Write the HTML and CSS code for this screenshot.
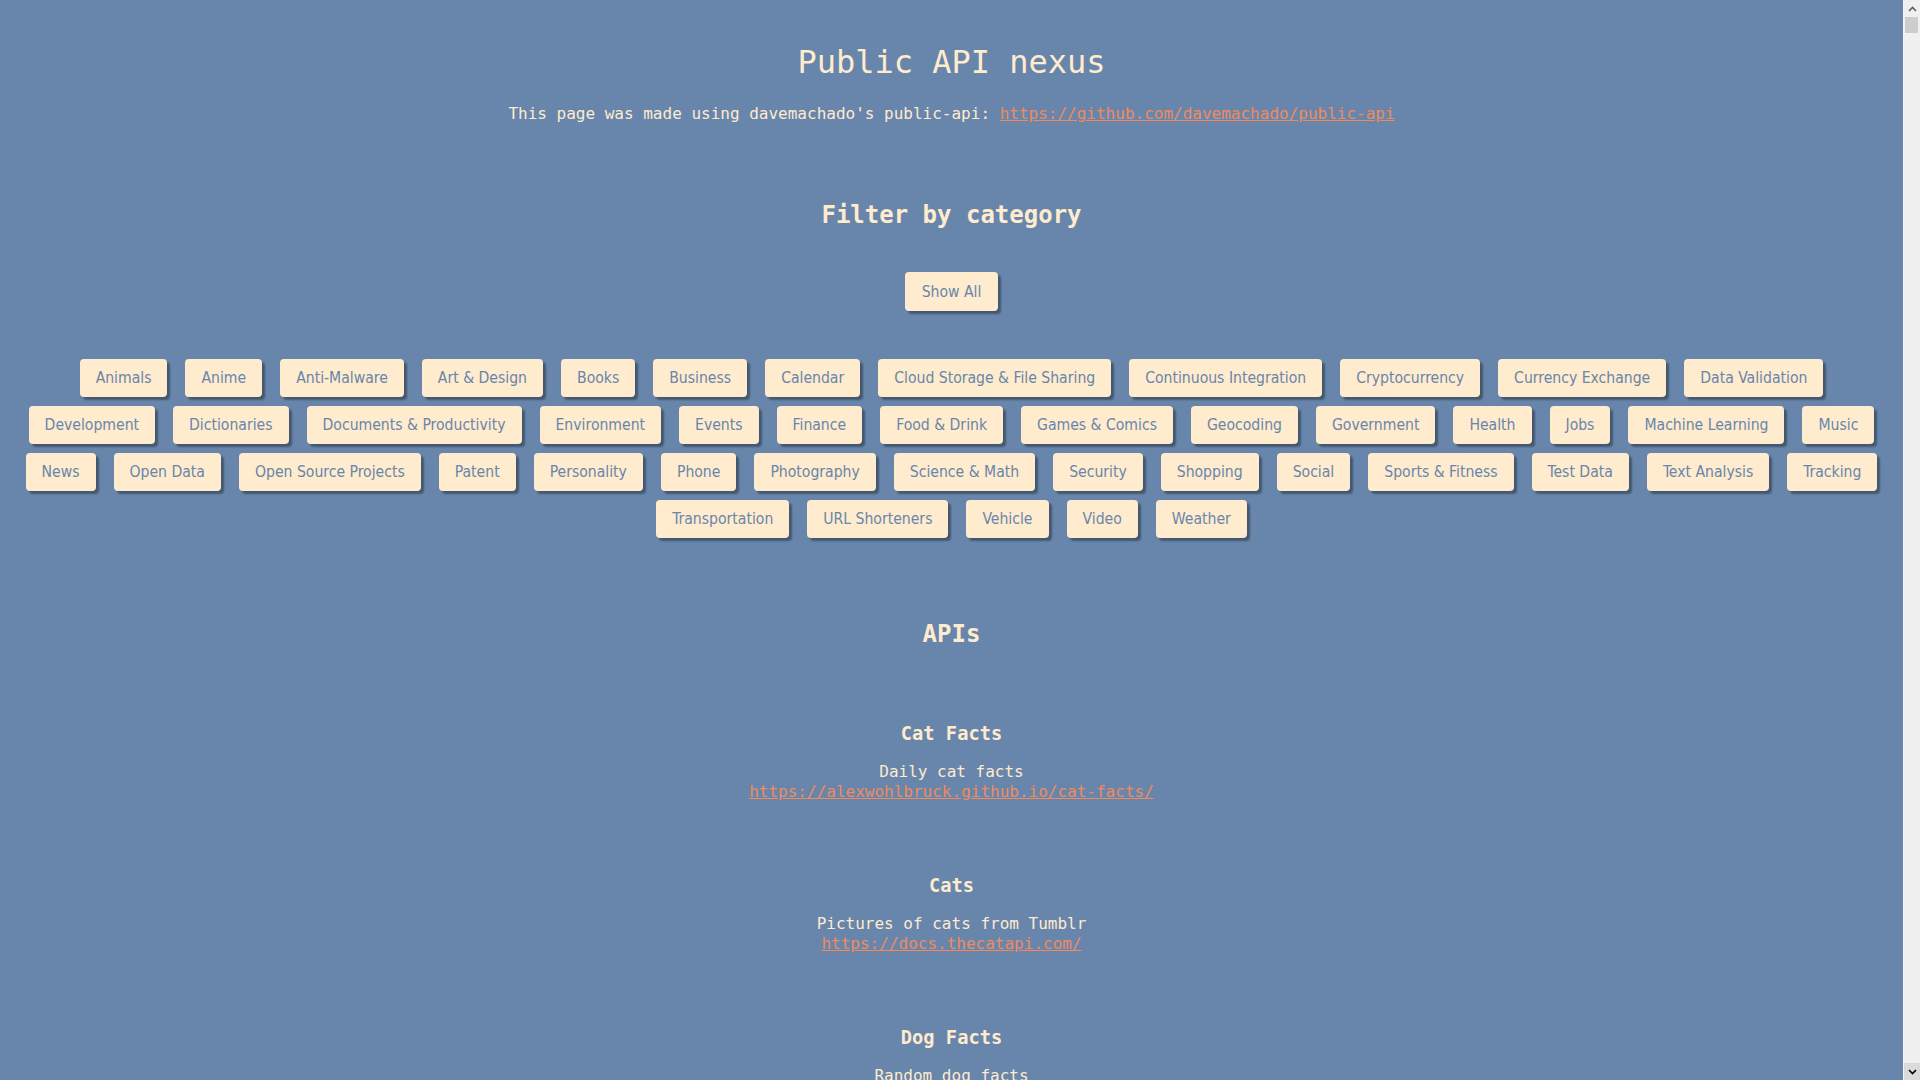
FILE: index.html
```html
<!DOCTYPE html>
<html lang="en">
<head>
<meta charset="utf-8">
<title>Public API nexus</title>
<link rel="stylesheet" href="styles.css">
</head>
<body>
<div class="scrollbar" aria-hidden="true">
  <div class="sb-btn sb-up">
    <svg width="9" height="6" viewBox="0 0 9 6"><path d="M1 5 L4.5 1.5 L8 5" fill="none" stroke="#606060" stroke-width="1.6"/></svg>
  </div>
  <div class="sb-track"><div class="sb-thumb"></div></div>
  <div class="sb-btn sb-down">
    <svg width="9" height="6" viewBox="0 0 9 6"><path d="M1 1 L4.5 4.5 L8 1" fill="none" stroke="#000" stroke-width="1.6"/></svg>
  </div>
</div>

<header class="site-header">
  <h1 class="title">Public API nexus</h1>
  <p class="subtitle">This page was made using davemachado's public-api: <a href="https://github.com/davemachado/public-api">https://github.com/davemachado/public-api</a></p>
</header>

<section class="filters">
  <h2 class="section-title">Filter by category</h2>
  <div class="show-all-wrap"><button class="cat-btn">Show All</button></div>
  <div class="categories">
    <div class="cat-row">
      <button class="cat-btn">Animals</button>
      <button class="cat-btn">Anime</button>
      <button class="cat-btn">Anti-Malware</button>
      <button class="cat-btn">Art &amp; Design</button>
      <button class="cat-btn">Books</button>
      <button class="cat-btn">Business</button>
      <button class="cat-btn">Calendar</button>
      <button class="cat-btn">Cloud Storage &amp; File Sharing</button>
      <button class="cat-btn">Continuous Integration</button>
      <button class="cat-btn">Cryptocurrency</button>
      <button class="cat-btn">Currency Exchange</button>
      <button class="cat-btn">Data Validation</button>
    </div>
    <div class="cat-row">
      <button class="cat-btn">Development</button>
      <button class="cat-btn">Dictionaries</button>
      <button class="cat-btn">Documents &amp; Productivity</button>
      <button class="cat-btn">Environment</button>
      <button class="cat-btn">Events</button>
      <button class="cat-btn">Finance</button>
      <button class="cat-btn">Food &amp; Drink</button>
      <button class="cat-btn">Games &amp; Comics</button>
      <button class="cat-btn">Geocoding</button>
      <button class="cat-btn">Government</button>
      <button class="cat-btn">Health</button>
      <button class="cat-btn">Jobs</button>
      <button class="cat-btn">Machine Learning</button>
      <button class="cat-btn">Music</button>
    </div>
    <div class="cat-row">
      <button class="cat-btn">News</button>
      <button class="cat-btn">Open Data</button>
      <button class="cat-btn">Open Source Projects</button>
      <button class="cat-btn">Patent</button>
      <button class="cat-btn">Personality</button>
      <button class="cat-btn">Phone</button>
      <button class="cat-btn">Photography</button>
      <button class="cat-btn">Science &amp; Math</button>
      <button class="cat-btn">Security</button>
      <button class="cat-btn">Shopping</button>
      <button class="cat-btn">Social</button>
      <button class="cat-btn">Sports &amp; Fitness</button>
      <button class="cat-btn">Test Data</button>
      <button class="cat-btn">Text Analysis</button>
      <button class="cat-btn">Tracking</button>
    </div>
    <div class="cat-row">
      <button class="cat-btn">Transportation</button>
      <button class="cat-btn">URL Shorteners</button>
      <button class="cat-btn">Vehicle</button>
      <button class="cat-btn">Video</button>
      <button class="cat-btn">Weather</button>
    </div>
  </div>
</section>

<section class="apis">
  <h2 class="section-title apis-title">APIs</h2>
  <div class="api-list">
    <article class="api">
      <h3 class="api-name">Cat Facts</h3>
      <p class="api-desc">Daily cat facts</p>
      <a class="api-link" href="https://alexwohlbruck.github.io/cat-facts/">https://alexwohlbruck.github.io/cat-facts/</a>
    </article>
    <article class="api">
      <h3 class="api-name">Cats</h3>
      <p class="api-desc">Pictures of cats from Tumblr</p>
      <a class="api-link" href="https://docs.thecatapi.com/">https://docs.thecatapi.com/</a>
    </article>
    <article class="api">
      <h3 class="api-name">Dog Facts</h3>
      <p class="api-desc">Random dog facts</p>
      <a class="api-link" href="https://kinduff.github.io/dog-api/">https://kinduff.github.io/dog-api/</a>
    </article>
    <article class="api">
      <h3 class="api-name">Dogs</h3>
      <p class="api-desc">Based on the Stanford Dogs Dataset</p>
      <a class="api-link" href="https://dog.ceo/dog-api/">https://dog.ceo/dog-api/</a>
    </article>
    <article class="api">
      <h3 class="api-name">HTTPCat</h3>
      <p class="api-desc">Cat for every HTTP Status</p>
      <a class="api-link" href="https://http.cat/">https://http.cat/</a>
    </article>
  </div>
</section>
</body>
</html>
```
FILE: styles.css
```css
html {
  background: #6886ab;
  scrollbar-width: none;
}

body {
  margin: 0;
  padding: 0 25px 40px 8px;
  background: #6886ab;
  color: #ffebcd;
  font-family: "DejaVu Sans Mono", "Liberation Mono", monospace;
  font-size: 16px;
  text-align: center;
}

a {
  color: #f08a5d;
}

/* decorative classic scrollbar on the right edge */
.scrollbar {
  position: fixed;
  top: 0;
  right: 0;
  bottom: 0;
  width: 17px;
  display: flex;
  flex-direction: column;
  background: #f0f0f0;
  border-left: 1px solid #f7f7f7;
  box-sizing: border-box;
  z-index: 10;
}

.sb-btn {
  height: 17px;
  flex: none;
  display: flex;
  align-items: center;
  justify-content: center;
}

.sb-down {
  background: #dadada;
}

.sb-track {
  flex: 1;
  padding: 0 2px 0 1px;
}

.sb-thumb {
  height: 16px;
  background: #cdcdcd;
}

.site-header {
  padding-top: 43px;
}

.title {
  margin: 0;
  font-size: 32px;
  line-height: 38px;
  font-weight: normal;
}

.subtitle {
  margin: 23px 0 0;
  line-height: 19px;
}

.section-title {
  margin: 78px 0 0;
  font-size: 24px;
  line-height: 28px;
  font-weight: bold;
}

.show-all-wrap {
  margin-top: 43px;
  display: flex;
  justify-content: center;
}

.categories {
  margin-top: 48px;
  display: flex;
  flex-direction: column;
  gap: 9px;
}

.cat-row {
  display: flex;
  justify-content: center;
  gap: 18px;
}

.cat-btn {
  height: 38px;
  padding: 0 16px;
  border: none;
  border-radius: 4px;
  background: #ffebcd;
  color: #6886ab;
  font-family: "DejaVu Sans Condensed", "DejaVu Sans", sans-serif;
  font-stretch: condensed;
  font-size: 15.6px;
  box-shadow: 3px 3px 2px rgba(0, 0, 0, 0.35);
  cursor: pointer;
}

.show-all-wrap .cat-btn {
  height: 39px;
  padding: 0 17px;
}

.apis-title {
  margin-top: 82px;
}

.api-list {
  margin-top: 75px;
  display: flex;
  flex-direction: column;
  gap: 73px;
}

.api {
  display: flex;
  flex-direction: column;
  align-items: center;
}

.api-name {
  margin: 0;
  font-size: 18.72px;
  line-height: 22px;
  font-weight: bold;
}

.api-desc {
  margin: 17px 0 0;
  line-height: 20px;
}

.api-link {
  line-height: 20px;
}
```
